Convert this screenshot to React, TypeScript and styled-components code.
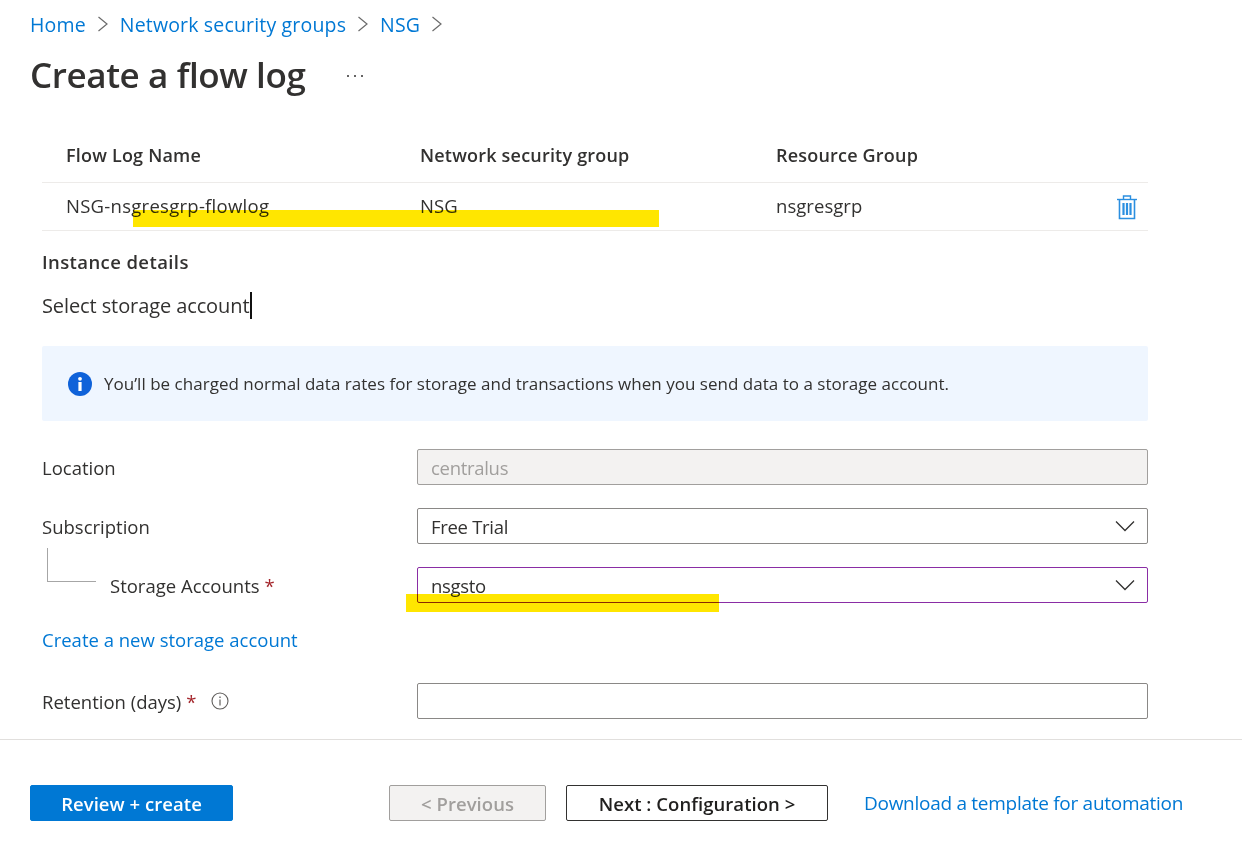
import { createGlobalStyle, styled } from "styled-components";

const GlobalStyle = createGlobalStyle`
  html, body {
    margin: 0;
    padding: 0;
    background: #fff;
  }
  body {
    font-family: "Open Sans", "Noto Sans", "Liberation Sans", sans-serif;
    color: #323130;
    overflow: hidden;
  }
`;

const Page = styled.div`
  width: 1242px;
  height: 844px;
  display: flex;
  flex-direction: column;
`;

const Header = styled.header`
  padding: 10px 0 0 30px;
`;

const Breadcrumb = styled.nav`
  display: flex;
  align-items: center;
  height: 28px;
  font-size: 19.5px;
  letter-spacing: 0.17px;
`;

const Crumb = styled.a`
  color: #0078d4;
`;

const CrumbChevron = styled.svg`
  width: 12px;
  height: 16px;
  margin: 0 11px;
  fill: none;
  stroke: #6b6b6b;
  stroke-width: 1.2;
`;

const TitleRow = styled.div`
  display: flex;
  align-items: center;
  height: 44px;
  margin-top: 14px;
`;

const Title = styled.h1`
  margin: 0;
  font-size: 35px;
  font-weight: 600;
  letter-spacing: -0.4px;
  color: #323130;
`;

const More = styled.svg`
  width: 18px;
  height: 4px;
  margin: 4px 0 0 41px;
  fill: #323130;
`;

const Body = styled.main`
  flex: 1;
  padding: 36px 94px 0 42px;
`;

const Table = styled.div`
  display: flex;
  flex-direction: column;
`;

const TableRow = styled.div<{ $head?: boolean }>`
  display: grid;
  grid-template-columns: 354px 356px 1fr 32px;
  align-items: center;
  box-sizing: border-box;
  height: ${(p) => (p.$head ? "51px" : "48px")};
  padding: 0 0 ${(p) => (p.$head ? "4px" : "2px")} 24px;
  border-bottom: 1px solid #edebe9;
  font-size: 18.5px;
  letter-spacing: 0.05px;
  color: #323130;
`;

const HeadCell = styled.span`
  font-weight: 600;
  font-size: 18px;
  letter-spacing: 0.2px;
`;

const Cell = styled.span<{ $wide?: boolean }>`
  color: #323130;
  letter-spacing: ${(p) => (p.$wide ? "0.27px" : "inherit")};
`;

const Highlight = styled.span<{ $left: number; $top: number; $width: number; $height: number }>`
  position: absolute;
  left: ${(p) => p.$left}px;
  top: ${(p) => p.$top}px;
  width: ${(p) => p.$width}px;
  height: ${(p) => p.$height}px;
  background: #ffe600;
  mix-blend-mode: multiply;
`;

const TrashIcon = styled.svg`
  width: 22px;
  height: 26px;
  margin-top: 2px;
  fill: none;
  stroke: #2b8fe0;
`;

const SectionTitle = styled.h2`
  margin: 18px 0 0;
  font-size: 18.5px;
  line-height: 26px;
  font-weight: 600;
  letter-spacing: 0.4px;
  color: #323130;
`;

const SelectText = styled.div`
  display: flex;
  align-items: center;
  height: 28px;
  margin-top: 16px;
  font-size: 20px;
  letter-spacing: -0.1px;
  color: #323130;
`;

const TextCaret = styled.span`
  display: inline-block;
  width: 1.5px;
  height: 27px;
  margin-left: 1px;
  background: #111;
`;

const InfoBox = styled.div`
  display: flex;
  align-items: center;
  gap: 12px;
  height: 75px;
  margin-top: 27px;
  padding: 0 0 0 26px;
  border-radius: 2px;
  background: #eff6ff;
  font-size: 17px;
  letter-spacing: 0.02px;
  color: #323130;
`;

const InfoIcon = styled.svg`
  width: 24px;
  height: 24px;
  flex: none;
`;

const Form = styled.div`
  display: grid;
  grid-template-columns: 375px 731px;
  grid-template-rows: 36px 36px 36px 34px 36px;
  row-gap: 23px;
  align-items: center;
  margin-top: 28px;
`;

const Label = styled.label<{ $nested?: boolean }>`
  position: relative;
  display: flex;
  align-items: center;
  padding-left: ${(p) => (p.$nested ? "68px" : "0")};
  font-size: 18.5px;
  letter-spacing: 0px;
  color: #323130;
`;

const Required = styled.span`
  margin-left: 5px;
  color: #a4262c;
`;

const TreeLine = styled.span`
  position: absolute;
  left: 5px;
  top: -25px;
  width: 48px;
  height: 33px;
  border-left: 1px solid #a6a6a6;
  border-bottom: 1px solid #a6a6a6;
`;

const HelpIcon = styled.svg`
  width: 18px;
  height: 18px;
  margin-left: 15px;
  fill: none;
  stroke: #605e5c;
`;

const Field = styled.div<{ $disabled?: boolean; $focus?: boolean }>`
  position: relative;
  display: flex;
  align-items: center;
  justify-content: space-between;
  box-sizing: border-box;
  height: 36px;
  padding: 0 13px;
  border: 1px solid ${(p) => (p.$focus ? "#8a2da5" : p.$disabled ? "#a19f9d" : "#8a8886")};
  border-radius: 2px;
  background: ${(p) => (p.$disabled ? "#f3f2f1" : "#fff")};
  color: ${(p) => (p.$disabled ? "#a19f9d" : "#323130")};
  font-size: 18.5px;
  letter-spacing: -0.3px;
`;

const Chevron = styled.svg`
  width: 20px;
  height: 12px;
  margin-right: -1px;
  fill: none;
  stroke: #323130;
  stroke-width: 1.3;
`;

const CreateLink = styled.a`
  grid-column: 1 / 3;
  margin-bottom: 8px;
  font-size: 18.5px;
  color: #0078d4;
`;

const Footer = styled.footer`
  display: flex;
  align-items: flex-start;
  height: 105px;
  box-sizing: border-box;
  padding: 45px 0 0 30px;
  border-top: 1px solid #e1dfdd;
`;

const Button = styled.button<{ $kind: "primary" | "disabled" | "default"; $width: number }>`
  box-sizing: border-box;
  width: ${(p) => p.$width}px;
  height: 36px;
  padding: 0;
  border-radius: 2px;
  border: 1px solid
    ${(p) => (p.$kind === "primary" ? "#0078d4" : p.$kind === "disabled" ? "#a19f9d" : "#323130")};
  background: ${(p) => (p.$kind === "primary" ? "#0078d4" : p.$kind === "disabled" ? "#f3f2f1" : "#fff")};
  color: ${(p) => (p.$kind === "primary" ? "#fff" : p.$kind === "disabled" ? "#a19f9d" : "#201f1e")};
  font-family: inherit;
  font-size: 18.5px;
  font-weight: 600;
  letter-spacing: 0.05px;
`;

const NavButtons = styled.div`
  display: flex;
  gap: 20px;
  margin-left: 156px;
`;

const TemplateLink = styled.a`
  margin-left: 36px;
  line-height: 36px;
  font-size: 19px;
  letter-spacing: -0.28px;
  color: #0078d4;
`;

function CrumbArrow() {
  return (
    <CrumbChevron viewBox="0 0 12 16">
      <path d="M1.5 1 L10 8 L1.5 15" />
    </CrumbChevron>
  );
}

function DownArrow() {
  return (
    <Chevron viewBox="0 0 20 12">
      <path d="M1 1.5 L10 10.5 L19 1.5" />
    </Chevron>
  );
}

export default function App() {
  return (
    <Page>
      <GlobalStyle />
      <Header>
        <Breadcrumb>
          <Crumb>Home</Crumb>
          <CrumbArrow />
          <Crumb>Network security groups</Crumb>
          <CrumbArrow />
          <Crumb>NSG</Crumb>
          <CrumbArrow />
        </Breadcrumb>
        <TitleRow>
          <Title>Create a flow log</Title>
          <More viewBox="0 0 18 4">
            <circle cx="2" cy="2" r="1" />
            <circle cx="9" cy="2" r="1" />
            <circle cx="16" cy="2" r="1" />
          </More>
        </TitleRow>
      </Header>

      <Body>
        <Table>
          <TableRow $head>
            <HeadCell>Flow Log Name</HeadCell>
            <HeadCell>Network security group</HeadCell>
            <HeadCell>Resource Group</HeadCell>
          </TableRow>
          <TableRow>
            <Cell $wide>NSG-nsgresgrp-flowlog</Cell>
            <Cell>NSG</Cell>
            <Cell>nsgresgrp</Cell>
            <TrashIcon viewBox="0 0 22 26">
              <path d="M1 5.5 H21" strokeWidth="1.4" />
              <path d="M7.5 5 V2 H14.5 V5" strokeWidth="1.4" />
              <path d="M3.5 6 V24.5 H18.5 V6" strokeWidth="1.6" />
              <path d="M7.5 9 V21 M11 9 V21 M14.5 9 V21" strokeWidth="2.2" />
            </TrashIcon>
          </TableRow>
        </Table>

        <SectionTitle>Instance details</SectionTitle>
        <SelectText>
          Select storage account
          <TextCaret />
        </SelectText>

        <InfoBox>
          <InfoIcon viewBox="0 0 24 24">
            <circle cx="12" cy="12" r="12" fill="#0f62d9" />
            <rect x="10.4" y="10" width="3.2" height="9" fill="#fff" />
            <circle cx="12" cy="6.8" r="1.9" fill="#fff" />
          </InfoIcon>
          You’ll be charged normal data rates for storage and transactions when you send data to a storage account.
        </InfoBox>

        <Form>
          <Label>Location</Label>
          <Field $disabled>centralus</Field>

          <Label>Subscription</Label>
          <Field>
            Free Trial
            <DownArrow />
          </Field>

          <Label $nested>
            <TreeLine />
            Storage Accounts<Required>*</Required>
          </Label>
          <Field $focus>
            nsgsto
            <DownArrow />
          </Field>

          <CreateLink>Create a new storage account</CreateLink>

          <Label>
            Retention (days)<Required>*</Required>
            <HelpIcon viewBox="0 0 18 18">
              <circle cx="9" cy="9" r="8" strokeWidth="1.1" />
              <path d="M9 7.5 V13.5" strokeWidth="1.2" />
              <path d="M9 4.5 V6" strokeWidth="1.3" />
            </HelpIcon>
          </Label>
          <Field />
        </Form>
      </Body>

      <Footer>
        <Button $kind="primary" $width={203}>Review + create</Button>
        <NavButtons>
          <Button $kind="disabled" $width={157}>&lt; Previous</Button>
          <Button $kind="default" $width={262}>Next : Configuration &gt;</Button>
        </NavButtons>
        <TemplateLink>Download a template for automation</TemplateLink>
      </Footer>

      <Highlight $left={133} $top={210} $width={526} $height={17} />
      <Highlight $left={406} $top={594} $width={313} $height={18} />
    </Page>
  );
}
